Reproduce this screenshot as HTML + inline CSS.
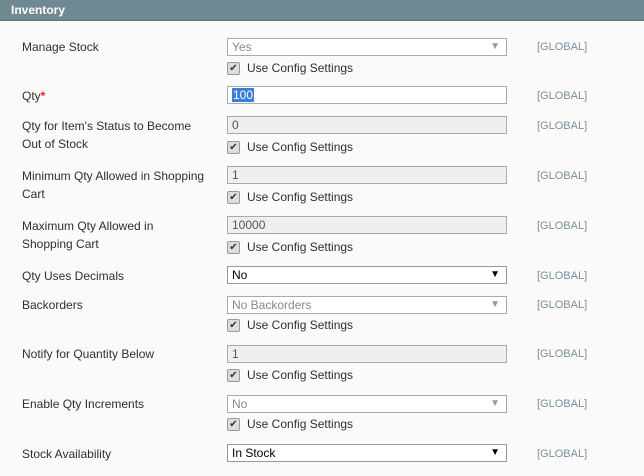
<!DOCTYPE html><html><head><style>
body{margin:0;width:644px;height:476px;background:#fafafa;font-family:"Liberation Sans",sans-serif;font-size:12px;color:#2f2f2f;position:relative;overflow:hidden}
.hd{position:absolute;left:0;top:0;width:644px;height:21px;background:#6f8992;border-bottom:1px solid #5b727a;color:#fff;font-weight:bold;font-size:12px;line-height:20px;padding-left:11px;box-sizing:border-box}
.l{position:absolute;left:22px;line-height:18px;margin-top:1px}
.g{position:absolute;left:537px;color:#7a8f9a;font-size:11px;margin-top:1px}
.f{position:absolute;left:227px;width:280px;height:18px;box-sizing:border-box;border:1px solid #aaa;line-height:16px;padding-left:4px}
.dis{background:#efefef;color:#555}
.sd{background:#fff;color:#888}
.s{background:#fff;color:#000;border-color:#999}
.f .a{position:absolute;right:6px;top:0;font-size:10px;color:#999}
.s .a{color:#000}
.c{position:absolute;left:227px;line-height:14px;margin-top:1px}
.c i{display:inline-block;width:11px;height:11px;background:#ddd;border:1px solid #999;border-radius:2px;vertical-align:-1px;margin-right:7px;font-style:normal;font-size:10px;line-height:11px;text-align:center;color:#333;position:relative;top:-2px}
</style></head><body>
<div class="hd">Inventory</div>
<div class="l" style="top:37px">Manage Stock</div>
<div class="f sd" style="top:38px">Yes<span class="a">▼</span></div>
<div class="c" style="top:60px"><i>✔</i>Use Config Settings</div>
<div class="g" style="top:40px">[GLOBAL]</div>

<div class="l" style="top:86px">Qty<span style="color:#e22626;font-weight:bold">*</span></div>
<div class="f" style="top:86px;background:#fff;color:#fff"><span style="background:#3d7edb;padding:0 1px">100</span></div>
<div class="g" style="top:89px">[GLOBAL]</div>

<div class="l" style="top:116px">Qty for Item's Status to Become<br>Out of Stock</div>
<div class="f dis" style="top:116px">0</div>
<div class="c" style="top:139px"><i>✔</i>Use Config Settings</div>
<div class="g" style="top:119px">[GLOBAL]</div>

<div class="l" style="top:166px">Minimum Qty Allowed in Shopping<br>Cart</div>
<div class="f dis" style="top:166px">1</div>
<div class="c" style="top:189px"><i>✔</i>Use Config Settings</div>
<div class="g" style="top:169px">[GLOBAL]</div>

<div class="l" style="top:216px">Maximum Qty Allowed in<br>Shopping Cart</div>
<div class="f dis" style="top:216px">10000</div>
<div class="c" style="top:239px"><i>✔</i>Use Config Settings</div>
<div class="g" style="top:219px">[GLOBAL]</div>

<div class="l" style="top:266px">Qty Uses Decimals</div>
<div class="f s" style="top:266px">No<span class="a">▼</span></div>
<div class="g" style="top:269px">[GLOBAL]</div>

<div class="l" style="top:295px">Backorders</div>
<div class="f sd" style="top:296px">No Backorders<span class="a">▼</span></div>
<div class="c" style="top:317px"><i>✔</i>Use Config Settings</div>
<div class="g" style="top:298px">[GLOBAL]</div>

<div class="l" style="top:344px">Notify for Quantity Below</div>
<div class="f dis" style="top:345px">1</div>
<div class="c" style="top:367px"><i>✔</i>Use Config Settings</div>
<div class="g" style="top:347px">[GLOBAL]</div>

<div class="l" style="top:394px">Enable Qty Increments</div>
<div class="f sd" style="top:395px">No<span class="a">▼</span></div>
<div class="c" style="top:416px"><i>✔</i>Use Config Settings</div>
<div class="g" style="top:397px">[GLOBAL]</div>

<div class="l" style="top:444px">Stock Availability</div>
<div class="f s" style="top:444px">In Stock<span class="a">▼</span></div>
<div class="g" style="top:447px">[GLOBAL]</div>
</body></html>
